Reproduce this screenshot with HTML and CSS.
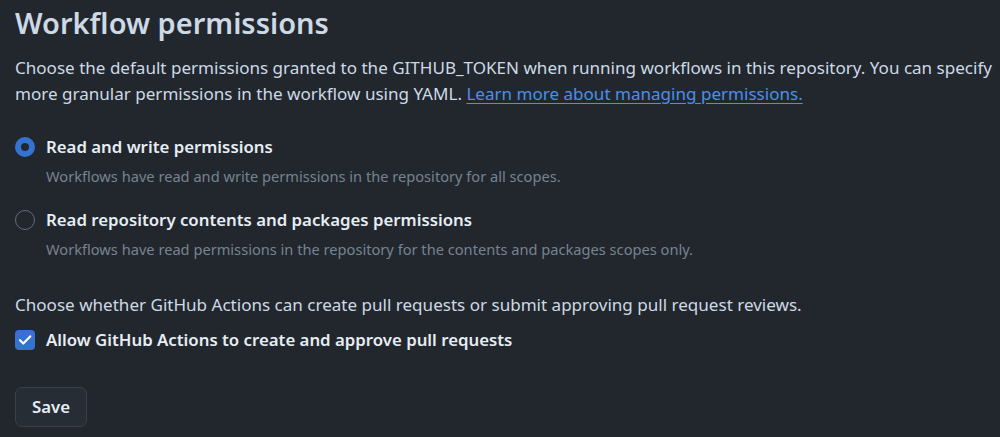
FILE: index.html
```html
<!DOCTYPE html>
<html lang="en">
<head>
<meta charset="utf-8">
<title>Workflow permissions</title>
<link rel="stylesheet" href="styles.css">
</head>
<body>
<section class="settings">
  <h2 class="heading">Workflow permissions</h2>
  <p class="intro">Choose the default permissions granted to the GITHUB_TOKEN when running workflows in this repository. You can specify more granular permissions in the workflow using YAML. <a href="#" class="link">Learn more about managing permissions.</a></p>

  <div class="options">
    <label class="option">
      <input type="radio" name="perm" class="radio" checked>
      <span class="option-text">
        <span class="option-title">Read and write permissions</span>
        <span class="option-desc">Workflows have read and write permissions in the repository for all scopes.</span>
      </span>
    </label>
    <label class="option">
      <input type="radio" name="perm" class="radio">
      <span class="option-text">
        <span class="option-title">Read repository contents and packages permissions</span>
        <span class="option-desc">Workflows have read permissions in the repository for the contents and packages scopes only.</span>
      </span>
    </label>
  </div>

  <p class="intro second">Choose whether GitHub Actions can create pull requests or submit approving pull request reviews.</p>

  <label class="check-row">
    <span class="checkbox" aria-hidden="true">
      <svg viewBox="0 0 20 20" width="20" height="20"><path d="M5 10.2l3.3 3.3L15.2 6.4" fill="none" stroke="#ffffff" stroke-width="2.2" stroke-linecap="round" stroke-linejoin="round"/></svg>
    </span>
    <span class="option-title">Allow GitHub Actions to create and approve pull requests</span>
  </label>

  <div class="actions">
    <button type="button" class="btn">Save</button>
  </div>
</section>
</body>
</html>
```
FILE: styles.css
```css
html, body {
  margin: 0;
  padding: 0;
  background: #22272e;
}
body {
  font-family: "Noto Sans", "Open Sans", sans-serif;
  color: #cdd9e5;
}
.settings {
  padding: 0 0 0 15px;
  display: flex;
  flex-direction: column;
}
.heading {
  margin: 5px 0 0;
  font-size: 29px;
  font-weight: 600;
  line-height: 36px;
  color: #cdd9e5;
}
.intro {
  margin: 14px 0 0;
  font-size: 17.06px;
  line-height: 26px;
  color: #cdd9e5;
}
.intro.second {
  margin-top: 33px;
}
.link {
  color: #4c8fea;
  text-decoration: underline;
  text-underline-offset: 3px;
}
.options {
  margin-top: 28px;
  display: flex;
  flex-direction: column;
  gap: 22px;
}
.option {
  display: flex;
  align-items: flex-start;
  gap: 11px;
}
.radio {
  appearance: none;
  -webkit-appearance: none;
  margin: 2px 0 0;
  width: 20px;
  height: 20px;
  flex: none;
  box-sizing: border-box;
  border-radius: 50%;
  border: 1px solid #636e7b;
  background: #22272e;
}
.radio:checked {
  border: 6px solid #3573d2;
}
.option-text {
  display: flex;
  flex-direction: column;
  gap: 7px;
}
.option-title {
  font-size: 16.8px;
  font-weight: 600;
  line-height: 24px;
  color: #e6edf3;
}
.option-desc {
  font-size: 14.63px;
  line-height: 20px;
  color: #768390;
}
.check-row {
  margin-top: 10px;
  display: flex;
  align-items: center;
  gap: 11px;
}
.checkbox {
  width: 20px;
  height: 20px;
  flex: none;
  border-radius: 4px;
  background: #3573d2;
  display: flex;
}
.actions {
  margin-top: 35px;
  display: flex;
}
.btn {
  font-family: "Noto Sans", "Open Sans", sans-serif;
  font-size: 16.8px;
  font-weight: 600;
  line-height: 24px;
  color: #e6edf3;
  background: #272d35;
  border: 1px solid #3a414a;
  border-radius: 7px;
  padding: 7px 16px;
}
```
